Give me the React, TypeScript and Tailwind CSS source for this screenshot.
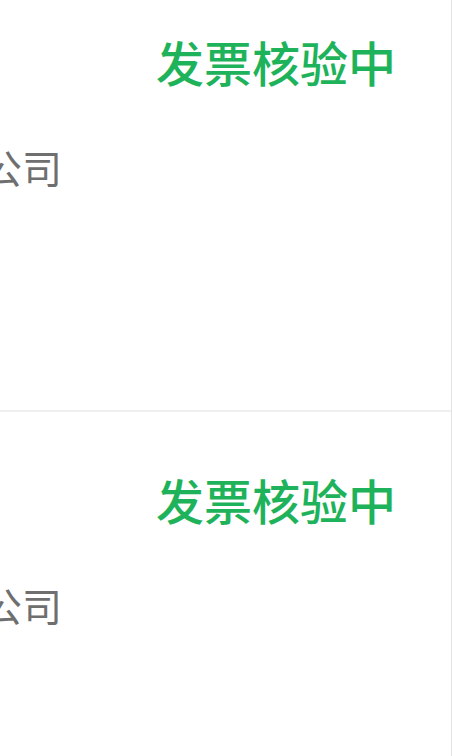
// 发票列表 – 截取的局部视图
const cards = [
  { id: 1, status: '发票核验中', company: '科技有限公司' },
  { id: 2, status: '发票核验中', company: '科技有限公司' },
];

function InvoiceCard({ status, company }: { status: string; company: string }) {
  return (
    <div className="h-[438px] shrink-0 border-b-2 border-[#efefef] bg-white pt-[63px]">
      <div className="flex justify-end pr-[55px]">
        <span className="h-[48px] text-[48px] font-medium leading-[48px] text-[#1eb35b] whitespace-nowrap">
          {status}
        </span>
      </div>
      <div className="mt-[62px] flex w-[62px] justify-end overflow-hidden">
        <span className="shrink-0 whitespace-nowrap text-[40px] leading-[40px] text-[#6f6f6f]">
          {company}
        </span>
      </div>
    </div>
  );
}

export default function App() {
  return (
    <div
      className="h-[756px] w-[452px] overflow-hidden border-r border-[#e2e2e2] bg-white"
      style={{ fontFamily: '"Noto Sans CJK SC", "Noto Sans", sans-serif' }}
    >
      <div className="-mt-[26px] flex flex-col">
        {cards.map((c) => (
          <InvoiceCard key={c.id} status={c.status} company={c.company} />
        ))}
      </div>
    </div>
  );
}
